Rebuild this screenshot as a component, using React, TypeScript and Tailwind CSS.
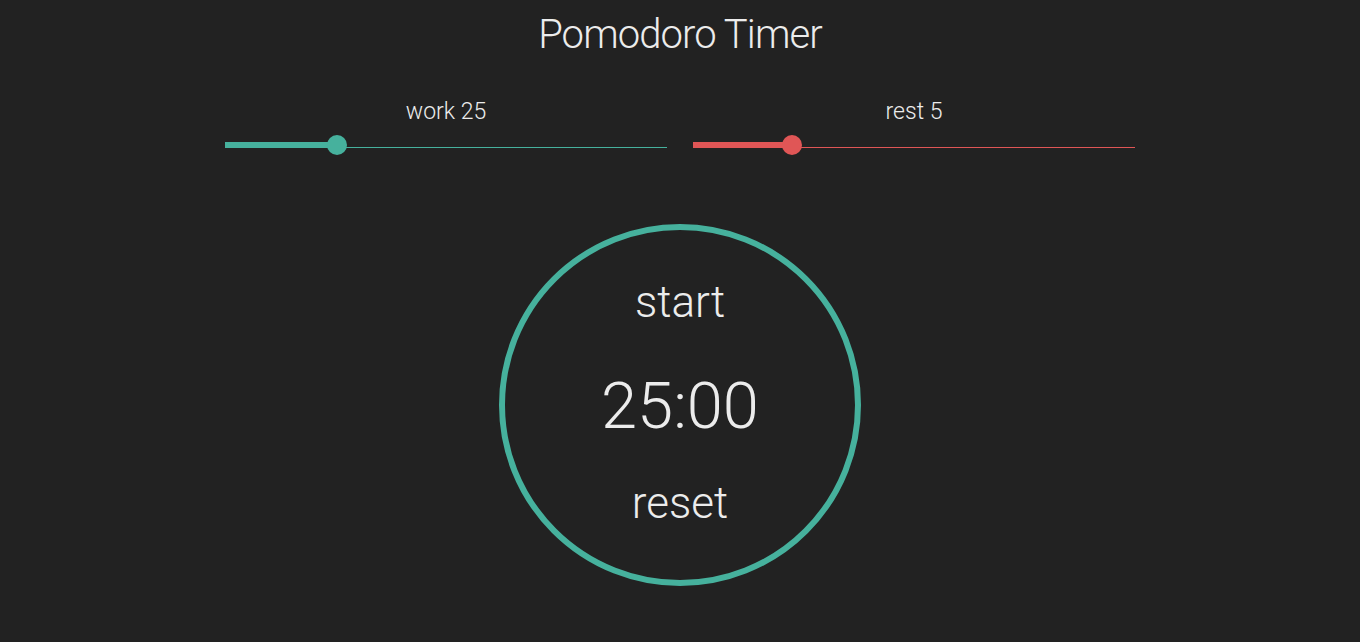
import React from "react";

function Slider({ label, pct, color }: { label: string; pct: number; color: string }) {
  const thumbX = 10 + pct * 422;
  return (
    <div className="flex w-[442px] flex-col items-center">
      <div className="text-[23px] font-light leading-[28px] text-[#ececec]">{label}</div>
      <div className="relative mt-[16px] h-[6px] w-full">
        <div className="absolute left-0 right-0 top-[5px] h-px" style={{ backgroundColor: color }} />
        <div className="absolute left-0 top-0 h-[6px]" style={{ width: thumbX, backgroundColor: color }} />
        <div
          className="absolute top-[-7px] h-[20px] w-[20px] rounded-full"
          style={{ left: thumbX - 10, backgroundColor: color }}
        />
      </div>
    </div>
  );
}

export default function App() {
  return (
    <div
      className="flex min-h-[642px] w-full flex-col items-center bg-[#222222] text-[#ececec]"
      style={{ fontFamily: "Roboto, 'Noto Sans', sans-serif", fontWeight: 300 }}
    >
      <h1 className="mt-[11px] text-[40px] font-light leading-[48px] tracking-[-0.9px]">Pomodoro Timer</h1>
      <div className="mt-[39px] flex gap-[26px]">
        <Slider label="work 25" pct={24 / 99} color="#46b19d" />
        <Slider label="rest 5" pct={4 / 19} color="#e05656" />
      </div>
      <div className="mt-[76px] flex h-[362px] w-[362px] flex-col items-center justify-center rounded-full border-[6px] border-[#46b19d] pb-[5px]">
        <button className="text-[44px] font-light leading-[52px] text-[#ececec]">start</button>
        <div className="mt-[42px] text-[65px] font-light leading-[72px]">25:00</div>
        <button className="mt-[35px] text-[44px] font-light leading-[52px] text-[#ececec]">reset</button>
      </div>
    </div>
  );
}
